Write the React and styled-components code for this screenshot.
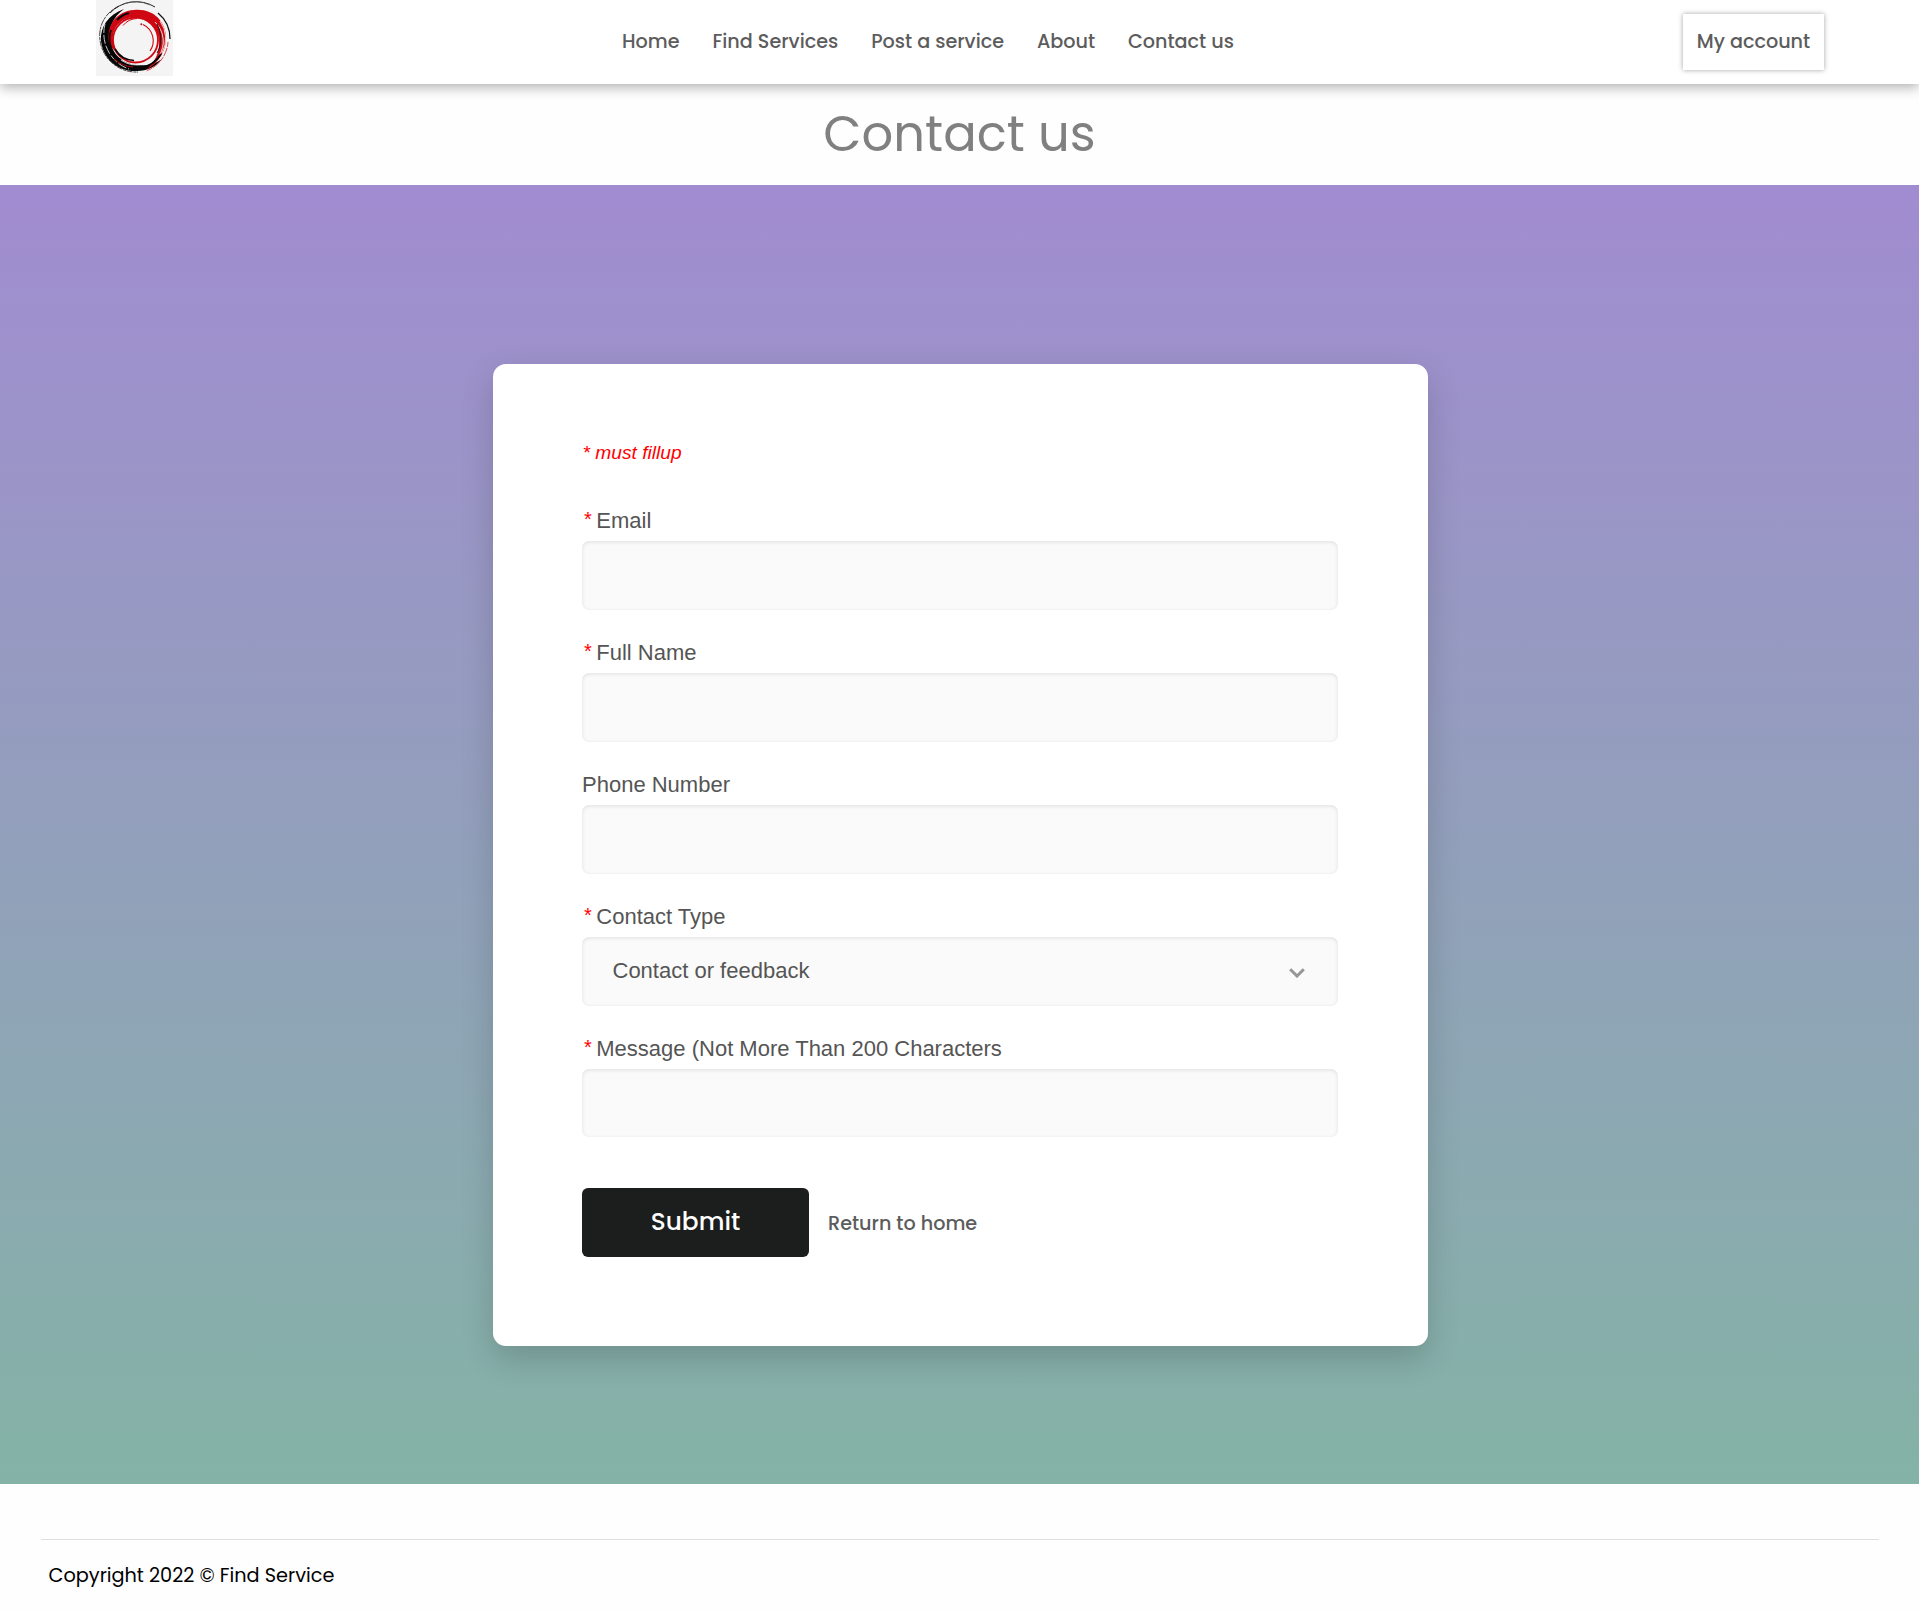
import React from 'react';
import styled, { createGlobalStyle } from 'styled-components';

const GlobalStyle = createGlobalStyle`
  * { box-sizing: border-box; }
  body { margin: 0; background: #fefefe; color: #555; font-family: Poppins, Inter, "Open Sans", sans-serif; }
`;

const arial = '"Liberation Sans", Arial, sans-serif';

const Header = styled.header`
  position: relative;
  display: grid;
  grid-template-columns: 1fr auto 1fr;
  height: 84px;
  padding: 0 95px 0 96px;
  background: #fff;
  box-shadow: 0 3px 12px rgba(0, 0, 0, 0.32);
`;
const Logo = styled.svg`
  display: block;
  width: 77px;
  height: 76px;
`;
const Nav = styled.nav`
  display: flex;
  gap: 32.8px;
  align-items: center;
  margin-right: 64px;
`;
const NavLink = styled.a`
  font-size: 19.2px;
  font-weight: 500;
  line-height: 28px;
  color: #5c5c5c;
  white-space: nowrap;
`;
const ReturnLink = styled(NavLink)`
  padding-top: 2px;
`;
const AccountButton = styled.button`
  justify-self: end;
  align-self: center;
  width: 141px;
  height: 56px;
  padding: 0;
  border: 0;
  background: #fff;
  box-shadow: 0 0 5px rgba(0, 0, 0, 0.36);
  font-family: inherit;
`;
const Title = styled.h1`
  margin: 0;
  height: 101px;
  padding-top: 14px;
  text-align: center;
  font-size: 49.6px;
  line-height: 72px;
  font-weight: 400;
  color: #808080;
`;
const Hero = styled.main`
  height: 1299px;
  padding: 179px 491px 0 493px;
  background: linear-gradient(180deg, #a18cd1 0%, #84b3a6 100%);
`;
const Card = styled.form`
  height: 982px;
  padding: 77px 90px 0 89px;
  border-radius: 13px;
  background: #fff;
  box-shadow: 0 13px 32px rgba(0, 0, 0, 0.17);
  font-family: ${arial};
`;
const Notice = styled.p`
  margin: 0 0 37px;
  padding-left: 0.5px;
  font-size: 19.2px;
  line-height: 24px;
  font-style: italic;
  color: #f00;
`;
const Field = styled.div`
  display: flex;
  flex-direction: column;
  height: 132px;
`;
const Label = styled.label`
  height: 39px;
  line-height: 37px;
  font-size: 22px;
  color: #555;
`;
const Star = styled.span`
  padding: 0 4.5px 0 2px;
  font-size: 20px;
  line-height: 1;
  vertical-align: 2px;
  color: #f00;
`;
const Control = styled.div`
  display: flex;
  align-items: center;
  justify-content: space-between;
  height: ${(p) => (p.$short ? 68 : 69)}px;
  padding: 0 33px 1px 30.5px;
  border-radius: 7px;
  background: #fafafa;
  box-shadow: inset 0 1px 4px rgba(0, 0, 0, 0.11);
  font-size: 22px;
  line-height: 26px;
  color: #555;
`;
const Chevron = styled.svg`
  width: 16px;
  height: 10px;
  margin-top: 4px;
`;
const Actions = styled.div`
  display: flex;
  align-items: center;
  gap: 19px;
  margin-top: 26px;
  font-family: Poppins, Inter, "Open Sans", sans-serif;
`;
const Submit = styled.button`
  width: 227px;
  height: 69px;
  padding: 0 0 3px;
  border: 0;
  border-radius: 6px;
  background: #1c1e1d;
  color: #fff;
  font-family: inherit;
  font-size: 24.8px;
  font-weight: 500;
`;
const Footer = styled.footer`
  padding: 55px 40px 0 41px;
`;
const FooterRow = styled.div`
  padding: 22px 7.6px 0;
  border-top: 1px solid #dfdfdf;
  font-size: 19.25px;
  line-height: 28px;
  color: #000;
`;

const nav = ['Home', 'Find Services', 'Post a service', 'About', 'Contact us'];
const fields = [
  { label: 'Email', required: true },
  { label: 'Full Name', required: true },
  { label: 'Phone Number' },
  { label: 'Contact Type', required: true, value: 'Contact or feedback' },
  { label: 'Message (Not More Than 200 Characters', required: true, short: true },
];

function BrushLogo() {
  return (
    <Logo viewBox="0 0 77 76" fill="none">
      <rect width="77" height="76" fill="#f4f4f4" />
      {/* black brush: thin at the top, heavy at the lower left */}
      <path d="M28 9C12 15 4 27 5 41C7 59 22 72 41 71C51 71 60 67 66 59C58 65 50 66 41 65C27 64 16 55 14 41C12 28 17 17 28 9Z" fill="#060606" />
      <path d="M23 6C10 12 2 25 4 40C6 58 22 73 42 72" stroke="#333" strokeWidth="0.9" strokeDasharray="6 1 3 0.6" />
      <path d="M59 7A36 36 0 0 0 14 13" stroke="#222" strokeWidth="1" />
      <path d="M54 5A36 36 0 0 0 27 4" stroke="#555" strokeWidth="0.7" />
      <path d="M9 24C4 43 15 63 33 69" stroke="#f4f4f4" strokeWidth="0.8" strokeDasharray="9 2" />
      {/* red brush: heavy at the top and right */}
      <path d="M13 43C10 26 20 11 38 10C57 8 69 21 70 36C71 50 62 64 50 70C59 62 64 52 63 41C62 27 52 17 39 17C26 17 16 27 17 40C18 46 19 48 21 52C17 50 14 47 13 43Z" fill="#cf0712" />
      <circle cx="39.5" cy="40" r="22.5" stroke="#cf0712" strokeWidth="1.8" />
      <path d="M21 20A27 27 0 0 1 33 13" stroke="#060606" strokeWidth="2" />
      <path d="M59 22A27 27 0 0 1 63 56" stroke="#f4f4f4" strokeWidth="0.9" />
      <path d="M64 21A30 30 0 0 1 66 53" stroke="#f4f4f4" strokeWidth="0.9" />
      <path d="M16 48A25.5 25.5 0 0 0 52 62" stroke="#f4f4f4" strokeWidth="0.8" />
      <path d="M15 30A26 26 0 0 0 25 60" stroke="#060606" strokeWidth="1.6" />
      <path d="M19 49A23 23 0 0 0 38 60.5" stroke="#060606" strokeWidth="1.6" />
      <path d="M61 24C66 34 66 45 61 53" stroke="#141414" strokeWidth="1" />
      <path d="M62 13A33 33 0 0 1 74 39" stroke="#111" strokeWidth="1.3" />
      <path d="M72 42A33 33 0 0 1 50 71" stroke="#d9303a" strokeWidth="0.9" strokeDasharray="5 1 9 1" />
      <path d="M65 54A30 30 0 0 1 44 68" stroke="#060606" strokeWidth="2" />
      <path d="M18 59A31 31 0 0 0 37 67" stroke="#a70710" strokeWidth="1" />
      <path d="M27 25.5A19 19 0 0 1 41 18.5" stroke="#cf0712" strokeWidth="1" />
      <path d="M47 24.5A18 18 0 0 1 54 51" stroke="#cf0712" strokeWidth="1.1" />
      <circle cx="45.3" cy="24.2" r="1" fill="#cf0712" />
    </Logo>
  );
}

export default function App() {
  return (
    <>
      <GlobalStyle />
      <Header>
        <BrushLogo />
        <Nav>
          {nav.map((text) => (
            <NavLink key={text}>{text}</NavLink>
          ))}
        </Nav>
        <AccountButton type="button"><NavLink as="span">My account</NavLink></AccountButton>
      </Header>
      <Title>Contact us</Title>
      <Hero>
        <Card>
          <Notice>* must fillup</Notice>
          {fields.map((f) => (
            <Field key={f.label}>
              <Label>{f.required && <Star>*</Star>}{f.label}</Label>
              <Control $short={f.short}>
                {f.value}
                {f.value && (
                  <Chevron viewBox="0 0 16 10" fill="none">
                    <path d="M1.2 1.2L8 8L14.8 1.2" stroke="#979797" strokeWidth="3" />
                  </Chevron>
                )}
              </Control>
            </Field>
          ))}
          <Actions>
            <Submit type="button">Submit</Submit>
            <ReturnLink>Return to home</ReturnLink>
          </Actions>
        </Card>
      </Hero>
      <Footer>
        <FooterRow>Copyright 2022 © Find Service</FooterRow>
      </Footer>
    </>
  );
}
